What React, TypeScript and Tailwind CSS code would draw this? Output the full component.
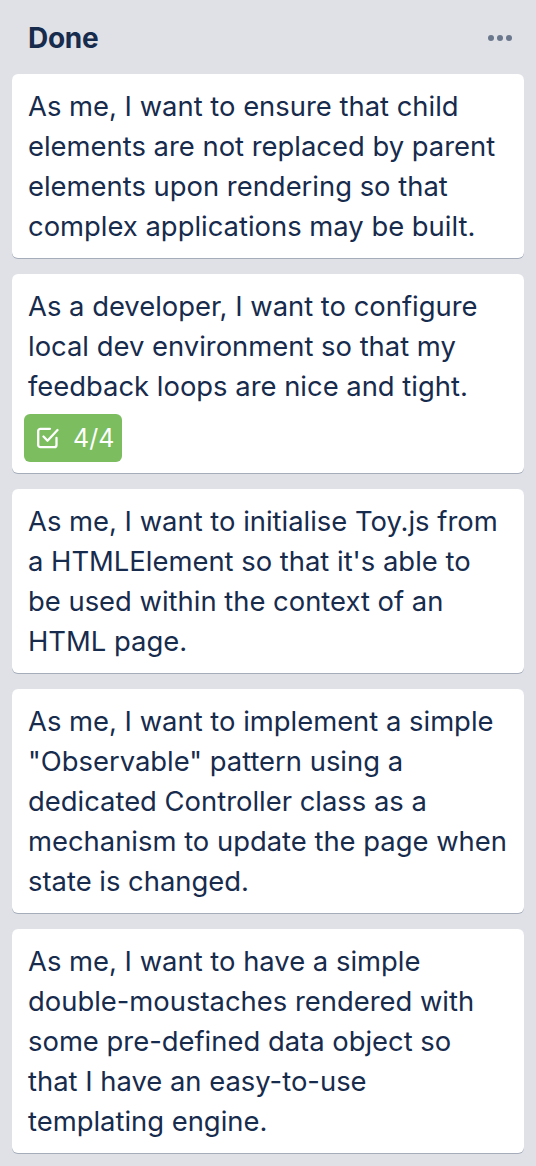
import React from "react";

const cards: { lines: string[]; badge?: string }[] = [
  { lines: ["As me, I want to ensure that child", "elements are not replaced by parent", "elements upon rendering so that", "complex applications may be built."] },
  { lines: ["As a developer, I want to configure", "local dev environment so that my", "feedback loops are nice and tight."], badge: "4/4" },
  { lines: ["As me, I want to initialise Toy.js from", "a HTMLElement so that it's able to", "be used within the context of an", "HTML page."] },
  { lines: ["As me, I want to implement a simple", "\"Observable\" pattern using a", "dedicated Controller class as a", "mechanism to update the page when", "state is changed."] },
  { lines: ["As me, I want to have a simple", "double-moustaches rendered with", "some pre-defined data object so", "that I have an easy-to-use", "templating engine."] },
];

export default function App() {
  return (
    <div
      className="w-[536px] h-[1166px] bg-[#dfe1e6] text-[#172b4d] overflow-hidden"
      style={{ fontFamily: "Inter, 'Noto Sans', sans-serif" }}
    >
      <div className="flex items-center justify-between h-[74px] pl-[28px] pr-[24px] pt-[2px]">
        <h2 className="text-[28px] font-bold tracking-[-0.3px]">Done</h2>
        <div className="flex gap-[3px] items-center">
          <span className="w-[6px] h-[6px] rounded-full bg-[#6b778c]" />
          <span className="w-[6px] h-[6px] rounded-full bg-[#6b778c]" />
          <span className="w-[6px] h-[6px] rounded-full bg-[#6b778c]" />
        </div>
      </div>
      <div className="flex flex-col gap-[16px] px-[12px]">
        {cards.map((c, i) => (
          <div
            key={i}
            className="bg-white rounded-[6px] shadow-[0_1px_0_#a5adba] px-[16px] pt-[12px] pb-[12px]"
          >
            <p className="text-[27.4px] leading-[40px] whitespace-nowrap">
              {c.lines.map((l, j) => (
                <span key={j} className="block">{l}</span>
              ))}
            </p>
            {c.badge && (
              <div className="mt-[8px] ml-[-4px] mb-[-1px] flex w-[98px] items-center h-[48px] pl-[13px] gap-[14px] rounded-[6px] bg-[#7bbd5f] text-white">
                <svg width="22" height="22" viewBox="0 0 22 22" fill="none" stroke="white" strokeWidth="2.3" strokeLinecap="round" strokeLinejoin="round">
                  <path d="M19.5 11v7a2.2 2.2 0 0 1-2.2 2.2H3.4a2.2 2.2 0 0 1-2.2-2.2V4a2.2 2.2 0 0 1 2.2-2.2H13" />
                  <path d="M6.5 9.5l4 4.2L20.5 3" />
                </svg>
                <span className="text-[25px] leading-none">{c.badge}</span>
              </div>
            )}
          </div>
        ))}
      </div>
    </div>
  );
}
